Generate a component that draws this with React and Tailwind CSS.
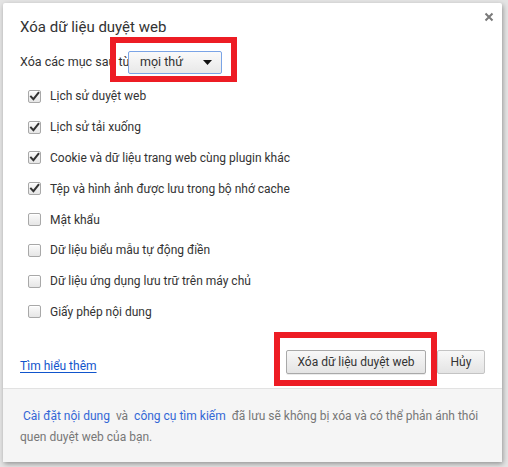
import React from "react";

const items = [
  { label: "Lịch sử duyệt web", checked: true },
  { label: "Lịch sử tải xuống", checked: true },
  { label: "Cookie và dữ liệu trang web cùng plugin khác", checked: true },
  { label: "Tệp và hình ảnh được lưu trong bộ nhớ cache", checked: true },
  { label: "Mật khẩu", checked: false },
  { label: "Dữ liệu biểu mẫu tự động điền", checked: false },
  { label: "Dữ liệu ứng dụng lưu trữ trên máy chủ", checked: false },
  { label: "Giấy phép nội dung", checked: false },
];

function Box({ checked }) {
  return (
    <div className="relative w-[13px] h-[13px] rounded-[2px] border border-[#a8a8a8] bg-gradient-to-b from-[#fbfbfb] to-[#e6e6e6] shadow-[inset_0_1px_0_#fff]">
      {checked && (
        <svg viewBox="0 0 13 13" className="absolute left-[-1px] top-[-1px] w-[13px] h-[13px]">
          <path d="M3 6.6 L5.4 9.2 L10.4 2.8" fill="none" stroke="#333" strokeWidth="2" strokeLinecap="square" />
        </svg>
      )}
    </div>
  );
}

export default function App() {
  return (
    <div
      className="w-[508px] h-[467px] bg-[#e4e4e4] pl-[3px] pt-[3px] overflow-hidden"
      style={{ fontFamily: 'Roboto, "Noto Sans", sans-serif' }}
    >
      <div className="relative w-[499px] h-[459px] bg-white rounded-[2px] shadow-[1px_2px_5px_rgba(0,0,0,0.35)] flex flex-col">
        <button className="absolute right-[8px] top-[9px] w-[10px] h-[10px]">
          <svg viewBox="0 0 10 10" className="w-[10px] h-[10px]">
            <path d="M1.5 1.5 L8.5 8.5 M8.5 1.5 L1.5 8.5" stroke="#7a7a7a" strokeWidth="2" />
          </svg>
        </button>
        <div className="pl-[17px] pt-[14px] text-[15px] leading-[20px] text-[#333]">
          Xóa dữ liệu duyệt web
        </div>
        <div className="pl-[17px] flex items-start h-[45px] relative">
          <span className="text-[12.5px] leading-[18px] text-[#333] pt-[16px]">Xóa các mục sau từ:</span>
          <div className="absolute left-[107px] top-0 w-[127px] h-[45px] border-[6px] border-[#ed1c24]"></div>
          <div className="absolute left-[125px] top-[14px] w-[94px] h-[23px] rounded-[2px] border border-[#7aa4e6] bg-gradient-to-b from-[#fafafa] to-[#e8e8e8] flex items-center pl-[11px] pr-[9px] justify-between">
            <span className="text-[12.5px] text-[#333]">mọi thứ</span>
            <svg viewBox="0 0 9 5" className="w-[9px] h-[5px]">
              <path d="M0 0 L9 0 L4.5 5 Z" fill="#111" />
            </svg>
          </div>
        </div>
        <div className="flex flex-col pl-[25px] mt-[-1px]">
          {items.map((it) => (
            <div key={it.label} className="flex items-center h-[30.8px] gap-[9px]">
              <Box checked={it.checked} />
              <span className="text-[12px] text-[#333]">{it.label}</span>
            </div>
          ))}
        </div>
        <div className="flex items-end justify-between pl-[17px] pr-[17px] mt-[5px] mb-[2px]">
          <a className="text-[12px] text-[#1155cc] underline underline-offset-[2px] mb-[11px]">Tìm hiểu thêm</a>
          <div className="flex items-end">
            <div className="border-[6px] border-[#ed1c24] pl-[6px] pr-[5px] pt-[12px] pb-[6px]">
              <button className="block w-[140px] h-[24px] rounded-[2px] border border-[#a9a9a9] bg-gradient-to-b from-[#f8f8f8] to-[#e4e4e4] text-[12px] text-[#333] shadow-[0_1px_0_rgba(0,0,0,0.08)]">
                Xóa dữ liệu duyệt web
              </button>
            </div>
            <button className="block w-[48px] h-[24px] mb-[12px] rounded-[2px] border border-[#c4c4c4] bg-gradient-to-b from-[#f8f8f8] to-[#e4e4e4] text-[12px] text-[#333]">
              Hủy
            </button>
          </div>
        </div>
        <div className="flex-1 bg-[#f5f5f5] border-t border-[#e2e2e2] pl-[17px] pr-[8px] pt-[17px] text-[12px] leading-[21px] text-[#777]">
          <div className="whitespace-nowrap">
            <span className="text-[#3367d6]">&nbsp;Cài đặt nội dung&nbsp;</span> và <span className="text-[#3367d6]">&nbsp;công cụ tìm kiếm&nbsp;</span> đã lưu sẽ không bị xóa và có thể phản ánh thói
          </div>
          <div>quen duyệt web của bạn.</div>
        </div>
      </div>
    </div>
  );
}
